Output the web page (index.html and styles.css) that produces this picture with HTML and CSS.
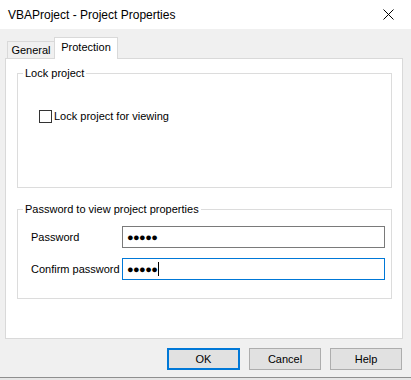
FILE: index.html
```html
<!DOCTYPE html>
<html>
<head>
<meta charset="utf-8">
<link rel="stylesheet" href="styles.css">
</head>
<body>
<div class="window">
  <div class="titlebar">
    <span class="title">VBAProject - Project Properties</span>
    <svg class="close" width="11" height="11" viewBox="0 0 11 11"><path d="M0.5 0.5 L10.5 10.5 M10.5 0.5 L0.5 10.5" stroke="#000" stroke-width="1" fill="none"/></svg>
  </div>
  <div class="body">
    <div class="tabs">
      <div class="tab">General</div>
      <div class="tab active">Protection</div>
    </div>
    <div class="panel">
      <fieldset class="group g1">
        <legend>Lock project</legend>
        <div class="g1-content">
          <label class="check"><span class="box"></span>Lock project for viewing</label>
        </div>
      </fieldset>
      <fieldset class="group g2">
        <legend>Password to view project properties</legend>
        <div class="g2-content">
          <div class="row">
            <span class="lbl">Password</span>
            <div class="input">●●●●●</div>
          </div>
          <div class="row">
            <span class="lbl">Confirm password</span>
            <div class="input focus">●●●●●<span class="caret"></span></div>
          </div>
        </div>
      </fieldset>
    </div>
    <div class="buttons">
      <div class="btn default">OK</div>
      <div class="btn">Cancel</div>
      <div class="btn">Help</div>
    </div>
  </div>
</div>
</body>
</html>
```
FILE: styles.css
```css
html, body {
  margin: 0;
  padding: 0;
}
body {
  width: 411px;
  height: 380px;
  overflow: hidden;
  background: #f0f0f0;
  font-family: "Liberation Sans", Arial, sans-serif;
  font-size: 11px;
  color: #000;
}
.window {
  width: 411px;
  height: 380px;
  display: flex;
  flex-direction: column;
  box-sizing: border-box;
  border-bottom: 2px solid #e6e6e6;
}
.titlebar {
  height: 29px;
  background: #fff;
  display: flex;
  align-items: center;
  justify-content: space-between;
  padding: 0 17px 0 8px;
  box-sizing: border-box;
}
.title {
  font-size: 12px;
  margin-top: 1px;
}
.close {
  display: block;
}
.body {
  flex: 1;
  display: flex;
  flex-direction: column;
  border-bottom: 1px solid #8f8f8f;
}
.tabs {
  display: flex;
  align-items: flex-end;
  height: 21px;
  margin-top: 8px;
  padding-left: 7px;
  position: relative;
  z-index: 1;
}
.tab {
  height: 17px;
  box-sizing: border-box;
  padding: 0;
  border: 1px solid #d9d9d9;
  border-bottom: none;
  background: #f0f0f0;
  line-height: 17px;
  width: 48px;
  text-align: center;
}
.tab.active {
  height: 22px;
  margin-bottom: -1px;
  background: #fff;
  width: 64px;
  line-height: 18px;
  margin-left: -1px;
}
.panel {
  margin: 0 8px 0 5px;
  height: 281px;
  box-sizing: border-box;
  border: 1px solid #d9d9d9;
  background: #fff;
  padding: 7px 10px 0 11px;
}
.group {
  margin: 0;
  padding: 0;
  border: 1px solid #dcdcdc;
  min-width: 0;
}
.group legend {
  padding: 0 2px;
  margin-left: 5px;
  line-height: 15px;
}
.g1-content {
  height: 106px;
  padding-top: 28px;
  padding-left: 21px;
  box-sizing: border-box;
}
.check {
  display: flex;
  align-items: center;
  height: 14px;
}
.box {
  width: 13px;
  height: 13px;
  box-sizing: border-box;
  border: 1px solid #333;
  background: #fff;
  margin-right: 2px;
}
.g2 {
  margin-top: 14px;
}
.g2-content {
  height: 81px;
  padding: 9px 0 0 13px;
  box-sizing: border-box;
  display: flex;
  flex-direction: column;
  gap: 10px;
}
.row {
  display: flex;
  align-items: center;
  height: 22px;
}
.lbl {
  width: 91px;
  flex: none;
}
.input {
  width: 263px;
  height: 22px;
  box-sizing: border-box;
  border: 1px solid #7a7a7a;
  padding-left: 4px;
  font-size: 11px;
  letter-spacing: -0.6px;
  line-height: 20px;
  display: flex;
  align-items: center;
}
.input.focus {
  border-color: #0078d7;
}
.caret {
  width: 1px;
  height: 14px;
  background: #000;
  margin-left: 1px;
}
.buttons {
  display: flex;
  justify-content: flex-end;
  gap: 9px;
  margin-top: 9px;
  padding-right: 9px;
}
.btn {
  width: 72px;
  height: 22px;
  box-sizing: border-box;
  border: 1px solid #adadad;
  background: #e1e1e1;
  text-align: center;
  line-height: 20px;
}
.btn.default {
  border: 2px solid #0078d7;
  line-height: 18px;
  width: 73px;
}
```
